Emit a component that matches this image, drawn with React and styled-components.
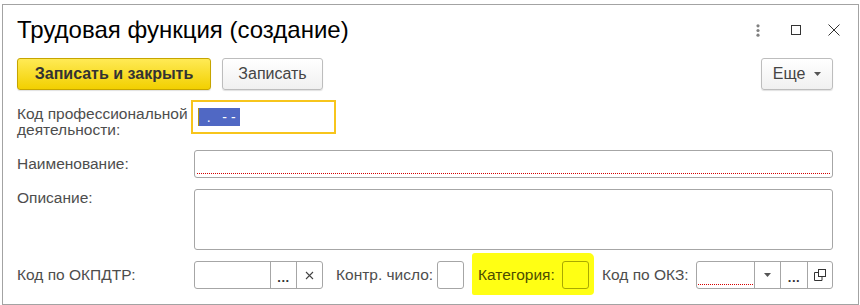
import React from 'react';
import styled, { createGlobalStyle } from 'styled-components';

const GlobalStyle = createGlobalStyle`
  html, body {
    margin: 0;
    padding: 0;
    background: #fff;
  }
  body {
    font-family: "Liberation Sans", Arial, sans-serif;
    font-size: 15.5px;
    color: #4d4d4d;
  }
`;

const Window = styled.div`
  box-sizing: border-box;
  width: 857px;
  height: 301px;
  margin: 4px 0 0 2px;
  border: 1px solid #a3a3a3;
  padding-left: 14px;
`;

const Header = styled.div`
  display: flex;
  align-items: center;
  justify-content: space-between;
  height: 28px;
  margin-top: 11px;
  padding-right: 5px;
`;

const Title = styled.h1`
  margin: 0;
  font-size: 24px;
  font-weight: normal;
  line-height: 28px;
  color: #000;
`;

const Controls = styled.div`
  display: flex;
  align-items: center;
`;

const CtrlButton = styled.div`
  width: 38px;
  height: 28px;
  display: flex;
  align-items: center;
  justify-content: center;
`;

const Body = styled.div`
  padding-right: 25px;
`;

const Toolbar = styled.div`
  display: flex;
  align-items: center;
  margin-top: 14px;
  gap: 11px;
`;

const Button = styled.button`
  box-sizing: border-box;
  height: 32px;
  width: ${p => p.$width}px;
  padding: 0;
  border-radius: 3px;
  font-family: inherit;
  font-size: 16px;
  cursor: pointer;
  border: 1px solid ${p => (p.$primary ? '#c6a500' : '#bdbdbd')};
  background: ${p =>
    p.$primary
      ? 'linear-gradient(#ffea55, #f2d000)'
      : 'linear-gradient(#ffffff, #f0f0f0)'};
  box-shadow: 0 1px 1px rgba(0, 0, 0, 0.12);
  color: ${p => (p.$primary ? '#333' : '#444')};
  font-weight: ${p => (p.$primary ? 'bold' : 'normal')};
  display: flex;
  align-items: center;
  justify-content: center;
  gap: 9px;
`;

const Spacer = styled.div`
  flex: 1;
`;

const Form = styled.div`
  display: flex;
  flex-direction: column;
`;

const Row = styled.div`
  display: flex;
  align-items: ${p => p.$align || 'center'};
  margin-top: ${p => p.$top}px;
`;

const Label = styled.div`
  flex: none;
  width: ${p => (p.$width ? p.$width + 'px' : 'auto')};
  margin-top: ${p => p.$offset || 0}px;
  margin-left: ${p => p.$left || 0}px;
  line-height: 16px;
  white-space: nowrap;
  color: ${p => (p.$marked ? '#4d4d00' : '#4d4d4d')};
`;

const Field = styled.div`
  box-sizing: border-box;
  flex: 1;
  height: ${p => p.$height}px;
  border: 1px solid #a6a6a6;
  border-radius: 3px;
  background: #fff;
  display: flex;
  flex-direction: column;
  justify-content: flex-end;
  padding: 0 2px 3px;
`;

const RequiredLine = styled.div`
  height: 0;
  border-bottom: 1px dotted #d40000;
`;

const FocusField = styled.div`
  box-sizing: border-box;
  width: 145px;
  height: 34px;
  margin: -3px 0 0 -3px;
  border: 2px solid #f7c51c;
  padding: 6px 0 0 5px;
`;

const Selection = styled.span`
  display: inline-block;
  box-sizing: border-box;
  width: 42px;
  height: 18px;
  overflow: hidden;
  font-size: 14px;
  line-height: 18px;
  border-left: 1px solid #b8960c;
  background: #5068c4;
  color: #fff;
  white-space: pre;
  vertical-align: top;
`;

const Compound = styled.div`
  box-sizing: border-box;
  display: flex;
  flex: none;
  height: 28px;
  border: 1px solid #a6a6a6;
  border-radius: 3px;
  background: #fff;
`;

const CompoundInput = styled.div`
  box-sizing: border-box;
  width: ${p => p.$width}px;
  display: flex;
  flex-direction: column;
  justify-content: flex-end;
  padding: 0 1px 3px;
`;

const CompoundButton = styled.div`
  box-sizing: border-box;
  width: ${p => p.$width}px;
  border-left: 1px solid #a6a6a6;
  display: flex;
  align-items: center;
  justify-content: center;
  color: #333;
`;

const Dots = styled.span`
  font-weight: bold;
  font-size: 13px;
  letter-spacing: 0.5px;
  margin-top: 5px;
`;

const Box = styled.div`
  box-sizing: border-box;
  flex: none;
  width: 27px;
  height: 28px;
  border: 1px solid ${p => (p.$marked ? '#a9a900' : '#a6a6a6')};
  border-radius: 3px;
  background: ${p => (p.$marked ? 'transparent' : '#fff')};
`;

const Highlight = styled.div`
  display: flex;
  align-items: center;
  flex: none;
  margin: -8px -5px -6px 8px;
  padding: 8px 5px 6px 6px;
  background: #ffff14;
  border-radius: 3px 5px 4px 2px;
`;

const Triangle = () => (
  <svg width="7" height="4" viewBox="0 0 7 4">
    <path d="M0 0H7L3.5 4Z" fill="#555" />
  </svg>
);

const Cross = () => (
  <svg width="9" height="9" viewBox="0 0 9 9">
    <path d="M1 1L8 8M8 1L1 8" stroke="#444" strokeWidth="1.1" />
  </svg>
);

const OpenIcon = () => (
  <svg width="12" height="13" viewBox="0 0 12 13">
    <rect x="4.5" y="0.5" width="7" height="7" fill="none" stroke="#333" />
    <path d="M4.5 3.5H0.5V11.5H8V7.5" fill="none" stroke="#333" />
  </svg>
);

const MoreIcon = () => (
  <svg width="4" height="13" viewBox="0 0 4 13">
    <circle cx="2" cy="1.8" r="1.6" fill="#808080" />
    <circle cx="2" cy="6.5" r="1.6" fill="#808080" />
    <circle cx="2" cy="11.2" r="1.6" fill="#808080" />
  </svg>
);

const MaximizeIcon = () => (
  <svg width="10" height="10" viewBox="0 0 10 10">
    <rect x="0.5" y="0.5" width="9" height="9" fill="none" stroke="#333" />
  </svg>
);

const CloseIcon = () => (
  <svg width="12" height="12" viewBox="0 0 12 12">
    <path d="M0.5 0.5L11.5 11.5M11.5 0.5L0.5 11.5" stroke="#333" strokeWidth="1" />
  </svg>
);

export default function App() {
  return (
    <>
      <GlobalStyle />
      <Window>
        <Header>
          <Title>Трудовая функция (создание)</Title>
          <Controls>
            <CtrlButton><MoreIcon /></CtrlButton>
            <CtrlButton><MaximizeIcon /></CtrlButton>
            <CtrlButton><CloseIcon /></CtrlButton>
          </Controls>
        </Header>
        <Body>
          <Toolbar>
            <Button $primary $width={194}>Записать и закрыть</Button>
            <Button $width={101}>Записать</Button>
            <Spacer />
            <Button $width={72}>Еще <Triangle /></Button>
          </Toolbar>
          <Form>
            <Row $top={13} $align="flex-start">
              <Label $width={177} $offset={3}>
                Код профессиональной
                <br />
                деятельности:
              </Label>
              <FocusField>
                <Selection>{'  .   - - '}</Selection>
              </FocusField>
            </Row>
            <Row $top={12}>
              <Label $width={177}>Наименование:</Label>
              <Field $height={28}>
                <RequiredLine />
              </Field>
            </Row>
            <Row $top={11} $align="flex-start">
              <Label $width={177} $offset={1}>Описание:</Label>
              <Field $height={61} />
            </Row>
            <Row $top={11}>
              <Label $width={177}>Код по ОКПДТР:</Label>
              <Compound>
                <CompoundInput $width={75} />
                <CompoundButton $width={26}><Dots>...</Dots></CompoundButton>
                <CompoundButton $width={26}><Cross /></CompoundButton>
              </Compound>
              <Label $left={13} $width={101}>Контр. число:</Label>
              <Box />
              <Highlight>
                <Label $marked $width={84}>Категория:</Label>
                <Box $marked />
              </Highlight>
              <Label $left={13} $width={94}>Код по ОКЗ:</Label>
              <Compound>
                <CompoundInput $width={57}>
                  <RequiredLine />
                </CompoundInput>
                <CompoundButton $width={26}><Triangle /></CompoundButton>
                <CompoundButton $width={27}><Dots>...</Dots></CompoundButton>
                <CompoundButton $width={25}><OpenIcon /></CompoundButton>
              </Compound>
            </Row>
          </Form>
        </Body>
      </Window>
    </>
  );
}
